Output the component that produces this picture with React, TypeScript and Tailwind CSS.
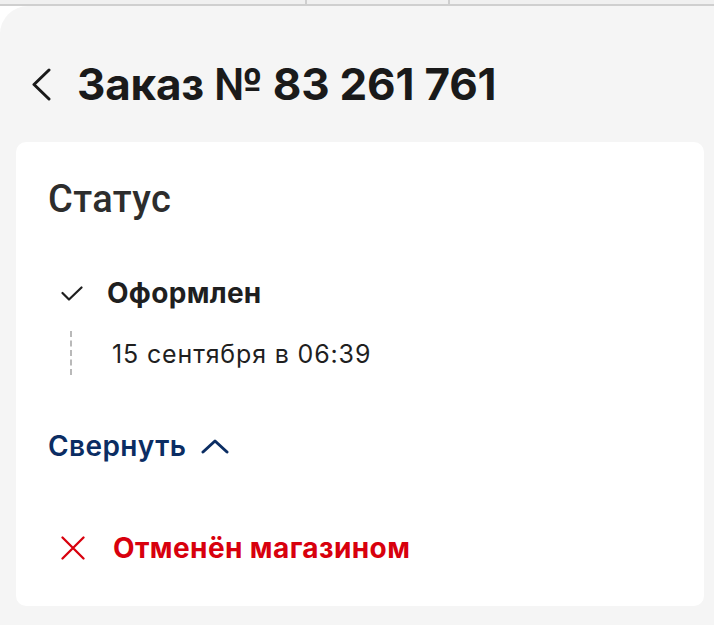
import React from 'react';

const ChevronLeft = () => (
  <svg width="22" height="33" viewBox="0 0 22 33" fill="none" stroke="#1a1a1a" strokeWidth="3" strokeLinecap="round" strokeLinejoin="round">
    <path d="M19 2 L4 16.5 L19 31" />
  </svg>
);

const Check = () => (
  <svg width="22" height="15" viewBox="0 0 22 15" fill="none" stroke="#1f1f1f" strokeWidth="2.2" strokeLinecap="round" strokeLinejoin="round">
    <path d="M1.5 7 L8 13.5 L20.5 1.5" />
  </svg>
);

const ChevronUp = () => (
  <svg width="28" height="15" viewBox="0 0 28 15" fill="none" stroke="#0b2d63" strokeWidth="3" strokeLinecap="round" strokeLinejoin="round">
    <path d="M2 13 L14 2 L26 13" />
  </svg>
);

const Cross = () => (
  <svg width="24" height="24" viewBox="0 0 24 24" fill="none" stroke="#d8000d" strokeWidth="2.3" strokeLinecap="round">
    <path d="M1.5 1.5 L22.5 22.5 M22.5 1.5 L1.5 22.5" />
  </svg>
);

export default function App() {
  return (
    <div className="w-[714px] h-[625px] bg-white overflow-hidden flex flex-col" style={{ fontFamily: "Inter, 'Noto Sans', sans-serif" }}>
      {/* верхняя полоска */}
      <div className="h-[6px] shrink-0 bg-[#f0f0f0] border-b-2 border-[#cfcfcf] flex">
        <div className="w-[307px] border-r-2 border-[#cfcfcf]" />
        <div className="w-[143px] border-r-2 border-[#cfcfcf]" />
        <div className="flex-1" />
      </div>

      <div className="flex-1 bg-[#f5f5f5] rounded-tl-[28px] flex flex-col px-4">
        <div className="flex items-center gap-[25px] pl-[14px] pt-[52px] pb-[32px]">
          <ChevronLeft />
          <h1 className="text-[44px] leading-[52px] font-bold tracking-[-0.2px] text-[#1a1a1a]">Заказ № 83 261 761</h1>
        </div>

        <div className="bg-white rounded-[10px] w-[688px] h-[464px] px-8 pt-[35px]">
          <div className="text-[38px] leading-[44px] font-medium text-[#2d2d2d] tracking-[0.4px]" style={{ fontFamily: "Roboto, sans-serif" }}>
            Статус
          </div>

          <div className="mt-[56px] flex items-center gap-[24px] pl-[13px]">
            <Check />
            <span className="text-[28px] leading-[32px] font-bold tracking-[0.3px] text-[#1f1f1f]">Оформлен</span>
          </div>

          <div className="flex mt-[22px] pl-[22px]">
            <div className="w-0 h-[44px] border-l-2 border-dashed border-[#b9b9b9]" />
            <span className="ml-[40px] mt-[8px] text-[25px] leading-[30px] tracking-[0.85px] text-[#1f1f1f]">15 сентября в 06:39</span>
          </div>

          <div className="mt-[54px] flex items-center gap-[15px]">
            <span className="text-[28px] leading-[34px] font-semibold tracking-[0.4px] text-[#0b2d63]">Свернуть</span>
            <ChevronUp />
          </div>

          <div className="mt-[68px] flex items-center gap-[28px] pl-[13px]">
            <Cross />
            <span className="text-[28px] leading-[34px] font-bold tracking-[0.4px] text-[#d8000d]">Отменён магазином</span>
          </div>
        </div>
      </div>
    </div>
  );
}
